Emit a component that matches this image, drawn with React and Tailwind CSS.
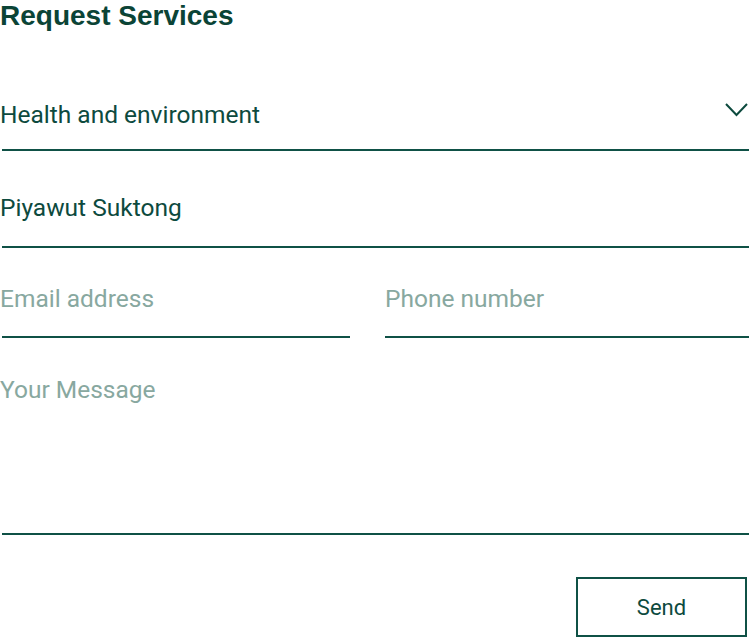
export default function App() {
  const font = { fontFamily: "Roboto, 'Liberation Sans', sans-serif" };
  return (
    <div className="w-[749px] h-[638px] bg-white text-[#0d4a3e]" style={font}>
      <h2 className="text-[28px] leading-[32px] font-bold text-[#0b4436]" style={{ fontFamily: "'Liberation Sans', Arial, sans-serif" }}>
        Request Services
      </h2>

      <div className="mt-[68px] ml-[2px] border-b-2 border-[#0f5146] pb-[19px] flex items-center justify-between">
        <span className="-ml-[2px] text-[24.5px] leading-[30px]">Health and environment</span>
        <svg width="23" height="14" viewBox="0 0 23 14" className="mb-[10px] mr-[1px]" fill="none">
          <polyline points="1,1 11.5,12 22,1" stroke="#0d4a3e" strokeWidth="2" />
        </svg>
      </div>

      <div className="pt-[42px] ml-[2px] border-b-2 border-[#0f5146] pb-[23px]">
        <div className="-ml-[2px] text-[24.5px] leading-[30px]">Piyawut Suktong</div>
      </div>

      <div className="flex gap-[35px] ml-[2px]">
        <div className="w-[348px] pt-[36px] pb-[22px] border-b-2 border-[#0f5146]">
          <div className="-ml-[2px] text-[24.5px] leading-[30px] text-[#88a8a0]">Email address</div>
        </div>
        <div className="flex-1 pt-[36px] pb-[22px] border-b-2 border-[#0f5146]">
          <div className="text-[24.5px] leading-[30px] text-[#88a8a0]">Phone number</div>
        </div>
      </div>

      <div className="pt-[37px] ml-[2px] border-b-2 border-[#0f5146] pb-[128px]">
        <div className="-ml-[2px] text-[24.5px] leading-[30px] text-[#88a8a0]">Your Message</div>
      </div>

      <div className="flex justify-end mt-[42px] pr-[2px]">
        <button className="w-[171px] h-[60px] border-2 border-[#0f5146] text-[22px] text-[#0d4a3e] flex items-center justify-center">
          Send
        </button>
      </div>
    </div>
  );
}
